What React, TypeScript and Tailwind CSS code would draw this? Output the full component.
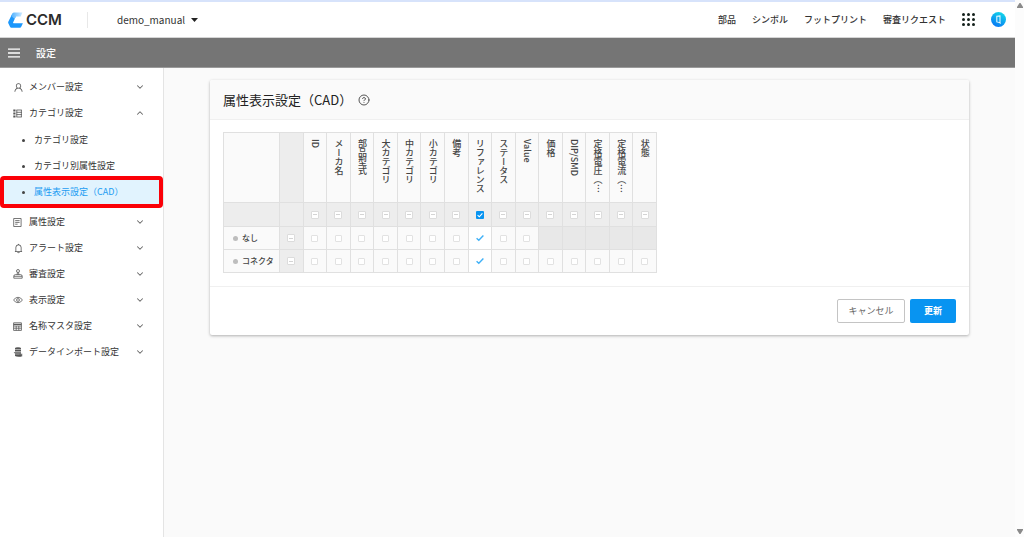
import { useState } from 'react'
import type { ReactNode } from 'react'
import { AiOutlineBell, AiOutlineUser } from 'react-icons/ai'
import { ChevronDown, ChevronUp, CircleQuestionMark } from 'lucide-react'
import clsx from 'clsx'

interface MenuItem {
  label: string
  icon: ReactNode
  children?: string[]
}

const NAV_LINKS = ['部品', 'シンボル', 'フットプリント', '審査リクエスト']

const CURRENT_PAGE = '属性表示設定（CAD）'

const TOP_MENU: MenuItem[] = [
  { label: 'メンバー設定', icon: <AiOutlineUser size={11} /> },
  {
    label: 'カテゴリ設定',
    icon: <CategoryIcon />,
    children: ['カテゴリ設定', 'カテゴリ別属性設定', CURRENT_PAGE],
  },
]

const BOTTOM_MENU: MenuItem[] = [
  { label: '属性設定', icon: <FormIcon /> },
  { label: 'アラート設定', icon: <AiOutlineBell size={11} /> },
  { label: '審査設定', icon: <StampIcon /> },
  { label: '表示設定', icon: <EyeIcon /> },
  { label: '名称マスタ設定', icon: <MasterIcon /> },
  { label: 'データインポート設定', icon: <ImportIcon /> },
]

const COLUMNS = [
  'ID',
  'メーカ名',
  '部品型式',
  '大カテゴリ',
  '中カテゴリ',
  '小カテゴリ',
  '備考',
  'リファレンス',
  'ステータス',
  'Value',
  '価格',
  'DIP/SMD',
  '定格電圧（…',
  '定格電流（…',
  '状態',
]

const FIXED_COLUMN = 'リファレンス'

// number of leading columns that apply to each category
const ROWS = [
  { name: 'なし', available: 10 },
  { name: 'コネクタ', available: 15 },
]

export default function App() {
  return (
    <div className="flex min-h-screen bg-[#fafafa] font-['Noto_Sans_CJK_JP','Noto_Sans',sans-serif] text-[9px] text-[#333]">
      <div className="flex min-w-0 flex-1 flex-col">
        <Header />
        <div className="flex h-[30px] items-center gap-4 border-b border-[#9a9a9a] bg-[#757575] px-2 text-white">
          <button type="button" aria-label="メニュー">
            <svg width="12" height="10" viewBox="0 0 12 10" stroke="currentColor" strokeWidth="1.3">
              <path d="M0 1.2h12M0 5h12M0 8.8h12" />
            </svg>
          </button>
          <h1 className="text-[10px] font-medium">設定</h1>
        </div>
        <div className="flex flex-1">
          <Sidebar />
          <main className="min-w-0 flex-1 px-[46px] pt-3">
            <SettingsCard />
          </main>
        </div>
      </div>
      <div className="flex w-[9px] shrink-0 flex-col items-center justify-between bg-[#fcfcfc] py-[3px]">
        <svg width="6" height="5" viewBox="0 0 6 5" fill="#8a8a8a">
          <path d="M2.5 0h1L6 4v1H0V4z" />
        </svg>
        <svg width="6" height="5" viewBox="0 0 6 5" fill="#8a8a8a">
          <path d="M2.5 5h1L6 1V0H0v1z" />
        </svg>
      </div>
    </div>
  )
}

function Header() {
  return (
    <header className="flex h-[38px] items-center border-t-2 border-b border-t-[#d7e3fb] border-b-[#d5d5d5] bg-white px-2">
      <a href="#" className="flex items-center gap-[3px]">
        <svg width="15" height="16" viewBox="0 0 15 16">
          <defs>
            <linearGradient id="logo-top" x1="0" y1="0" x2="1" y2="0">
              <stop offset="0" stopColor="#4fb1ff" />
              <stop offset="1" stopColor="#cfeaff" />
            </linearGradient>
          </defs>
          <path
            d="M4.4 1.6L0.3 9.8Q0 10.5 0.3 11.2L2 14.8Q2.4 15.7 3.4 15.7H12Q12.8 15.7 13.1 15L14.9 11.2H5.6Q4.8 11.2 5.1 10.4L7.8 4.4z"
            fill="#1c97fb"
          />
          <path d="M6 0.4H14.4L12.7 4.4H7.8L6.6 7L3.2 4L4.4 1.5Q4.9 0.4 6 0.4z" fill="url(#logo-top)" />
        </svg>
        <span className="font-['Inter',sans-serif] text-[15px] leading-4 font-semibold text-[#2b2b2b]">CCM</span>
      </a>
      <div className="ml-[25px] flex h-4 items-center border-l border-[#e8e8e8] pl-[29px]">
        <button type="button" className="flex items-center gap-[6px] text-[10px]">
          demo_manual
          <svg width="7" height="4" viewBox="0 0 7 4" fill="#222">
            <path d="M0 0h7L3.5 4z" />
          </svg>
        </button>
      </div>
      <nav className="ml-auto flex items-center gap-4 font-medium">
        {NAV_LINKS.map((link) => (
          <a key={link} href="#">
            {link}
          </a>
        ))}
        <button type="button" aria-label="アプリ一覧">
          <svg width="13" height="13" viewBox="0 0 13 13" fill="#14211c">
            {[1.5, 6.5, 11.5].map((cy) =>
              [1.5, 6.5, 11.5].map((cx) => <circle key={`${cx}-${cy}`} cx={cx} cy={cy} r="1.5" />),
            )}
          </svg>
        </button>
        <button type="button" aria-label="アカウント" className="mr-px">
          <svg width="15" height="15" viewBox="0 0 16 16">
            <defs>
              <linearGradient id="avatar" x1="0.8" y1="0" x2="0.3" y2="1">
                <stop offset="0" stopColor="#12dbe8" />
                <stop offset="1" stopColor="#0876f5" />
              </linearGradient>
            </defs>
            <circle cx="8" cy="8" r="8" fill="url(#avatar)" />
            <path d="M6.2 4.6L9.6 4.2V11.4L6.2 10.6z" fill="none" stroke="#e9f8ff" strokeWidth="1.1" />
            <path d="M8.6 11.2L10.4 12.2" stroke="#e9f8ff" strokeWidth="1" />
          </svg>
        </button>
      </nav>
    </header>
  )
}

function Sidebar() {
  return (
    <nav className="w-[164px] shrink-0 border-r border-[#e4e4e4] bg-white pt-[6px]">
      <ul>
        {TOP_MENU.map((item) => (
          <MenuRow key={item.label} item={item} />
        ))}
      </ul>
      <ul>
        {BOTTOM_MENU.map((item) => (
          <MenuRow key={item.label} item={item} />
        ))}
      </ul>
    </nav>
  )
}

function MenuRow({ item }: { item: MenuItem }) {
  const Chevron = item.children ? ChevronUp : ChevronDown
  return (
    <li>
      <button type="button" className="flex h-[26px] w-full items-center pr-[18px] pl-[13px] text-left">
        <span className="w-4 text-[#555]">{item.icon}</span>
        <span className="flex-1">{item.label}</span>
        <Chevron size={10} strokeWidth={2.5} className="text-[#666]" />
      </button>
      {item.children ? (
        <ul className="pt-px pb-1">
          {item.children.map((child) => (
            <SubMenuRow key={child} label={child} active={child === CURRENT_PAGE} />
          ))}
        </ul>
      ) : null}
    </li>
  )
}

function SubMenuRow({ label, active }: { label: string; active: boolean }) {
  return (
    <li className="relative">
      <a
        href="#"
        className={clsx('flex h-[26px] items-center gap-[9px] pl-[22px]', active && 'bg-[#e1f3fe] text-[#1c9cf2]')}
      >
        <span className="size-[3px] rounded-full bg-[#444]" />
        {label}
      </a>
      {active ? (
        <span className="pointer-events-none absolute inset-x-0 -inset-y-[3px] rounded-sm border-4 border-[#fb0007]" />
      ) : null}
    </li>
  )
}

function SettingsCard() {
  return (
    <section className="rounded-xs bg-white shadow-[0_1px_3px_rgba(0,0,0,0.3)]">
      <div className="flex h-10 items-center gap-[6px] rounded-t-xs border-b border-[#f0f0f0] bg-[#fafafa] px-[13px]">
        <h2 className="text-[13px] text-[#222]">{CURRENT_PAGE}</h2>
        <button type="button" aria-label="ヘルプ">
          <CircleQuestionMark size={12} strokeWidth={2} className="text-[#555]" />
        </button>
      </div>
      <div className="overflow-x-auto px-[13px] pt-3 pb-[13px]">
        <AttributeTable />
      </div>
      <div className="flex justify-end gap-[5px] border-t border-[#f0f0f0] px-[13px] py-3">
        <button type="button" className="h-6 w-[68px] rounded-xs border border-[#c4c4c4] bg-white text-[#666]">
          キャンセル
        </button>
        <button type="button" className="h-6 w-[46px] rounded-xs bg-[#0894f1] font-bold text-white">
          更新
        </button>
      </div>
    </section>
  )
}

function AttributeTable() {
  return (
    <table className="w-[434px] table-fixed border-collapse bg-[#fafafa] text-[#444] [&_td]:border [&_td]:border-[#e0e0e0] [&_td]:p-0 [&_th]:border [&_th]:border-[#e0e0e0] [&_th]:p-0 [&_th]:font-medium">
      <colgroup>
        <col className="w-14" />
        <col span={16} />
      </colgroup>
      <thead>
        <tr className="h-[70px] align-top">
          <td />
          <td className="bg-[#ededed]" />
          {COLUMNS.map((column) => (
            <th key={column} scope="col">
              <span className="flex justify-center pt-[6px] leading-3">
                <span className="whitespace-nowrap [writing-mode:vertical-rl]">{column}</span>
              </span>
            </th>
          ))}
        </tr>
        <tr className="h-6 bg-[#ededed]">
          <td />
          <td />
          {COLUMNS.map((column) => (
            <td key={column}>
              {column === FIXED_COLUMN ? (
                <HeaderCheck label={`${column} すべて`} />
              ) : (
                <MinusBox label={`${column} すべて`} />
              )}
            </td>
          ))}
        </tr>
      </thead>
      <tbody>
        {ROWS.map((row) => (
          <tr key={row.name} className="h-[23px]">
            <th scope="row" className="text-left text-[8px]">
              <span className="flex items-center gap-1 pl-[9px] whitespace-nowrap">
                <span className="size-[5px] rounded-full bg-[#bdbdbd]" />
                {row.name}
              </span>
            </th>
            <td className="bg-[#ededed]">
              <MinusBox label={`${row.name} すべて`} />
            </td>
            {COLUMNS.map((column, index) => (
              <td
                key={column}
                className={clsx(column === FIXED_COLUMN && 'bg-white', index >= row.available && 'bg-[#e8e8e8]')}
              >
                {index >= row.available ? null : column === FIXED_COLUMN ? (
                  <FixedCheck label={`${row.name} ${column}`} />
                ) : (
                  <EmptyBox label={`${row.name} ${column}`} />
                )}
              </td>
            ))}
          </tr>
        ))}
      </tbody>
    </table>
  )
}

function EmptyBox({ label }: { label: string }) {
  const [checked, setChecked] = useState(false)
  return (
    <input
      type="checkbox"
      aria-label={label}
      checked={checked}
      onChange={(e) => setChecked(e.target.checked)}
      className="mx-auto block size-[7px] appearance-none rounded-[1px] border border-[#e2e2e2] bg-white checked:bg-[#0894f1]"
    />
  )
}

function MinusBox({ label }: { label: string }) {
  return (
    <span className="grid place-items-center">
      <input
        type="checkbox"
        aria-label={label}
        className="col-start-1 row-start-1 size-2 appearance-none rounded-[1px] border border-[#dcdcdc] bg-white"
      />
      <span className="pointer-events-none col-start-1 row-start-1 h-px w-1 bg-[#d4d4d4]" />
    </span>
  )
}

function HeaderCheck({ label }: { label: string }) {
  return (
    <span className="grid place-items-center">
      <input
        type="checkbox"
        aria-label={label}
        defaultChecked
        className="col-start-1 row-start-1 size-2 appearance-none rounded-[1px] bg-[#0894f1]"
      />
      <svg className="pointer-events-none col-start-1 row-start-1" width="8" height="8" viewBox="0 0 8 8" fill="none">
        <path d="M1.6 4.1l1.7 1.7 3.1-3.4" stroke="#fff" strokeWidth="1.1" />
      </svg>
    </span>
  )
}

function FixedCheck({ label }: { label: string }) {
  return (
    <span className="grid place-items-center">
      <input
        type="checkbox"
        aria-label={label}
        checked
        readOnly
        className="col-start-1 row-start-1 size-2 appearance-none"
      />
      <svg className="pointer-events-none col-start-1 row-start-1" width="8" height="8" viewBox="0 0 8 8" fill="none">
        <path d="M0.6 4.2l2.2 2 4.6-4.6" stroke="#3eb0f7" strokeWidth="1.4" />
      </svg>
    </span>
  )
}

function CategoryIcon() {
  return (
    <svg width="9" height="9" viewBox="0 0 9 9" fill="none" stroke="currentColor">
      <path d="M0.3 1.5h2.2M0.3 4.5h2.2M0.3 7.5h2.2" strokeWidth="2" />
      <path d="M3.4 1h5.4M3.4 3.3h5.4M3.4 5.6h5.4M3.4 8h5.4M3.8 1v7M8.4 1v7" strokeWidth="0.8" />
    </svg>
  )
}

function FormIcon() {
  return (
    <svg width="9" height="9" viewBox="0 0 9 9" fill="none" stroke="currentColor" strokeWidth="0.8">
      <path d="M0.7 0.5h7.4v8H0.7zM2.2 2.6h4.4M2.2 4.4h4.4M2.2 6.2h2.4" />
    </svg>
  )
}

function StampIcon() {
  return (
    <svg width="10" height="10" viewBox="0 0 10 10" fill="none" stroke="currentColor" strokeWidth="0.8">
      <circle cx="5" cy="2" r="1.5" />
      <path d="M4.3 3.4v2.2M5.7 3.4v2.2M2.4 5.6h5.2q1.6 0 1.6 1.7H0.8q0-1.7 1.6-1.7zM0.8 7.3v1.9h8.4V7.3" />
    </svg>
  )
}

function EyeIcon() {
  return (
    <svg width="10" height="8" viewBox="0 0 10 8" fill="none" stroke="currentColor" strokeWidth="0.8">
      <path d="M0.6 4Q2.2 1.3 5 1.3T9.4 4Q7.8 6.7 5 6.7T0.6 4z" />
      <circle cx="5" cy="4" r="1.4" />
    </svg>
  )
}

function MasterIcon() {
  return (
    <svg width="9" height="9" viewBox="0 0 9 9" fill="none" stroke="currentColor" strokeWidth="0.8">
      <path d="M0.6 0.8h7.8v7.6H0.6zM0.6 4h7.8M0.6 6.2h7.8M3.2 4v4.4M5.8 4v4.4" />
      <path d="M0.6 2.4h7.8" strokeWidth="1.1" />
    </svg>
  )
}

function ImportIcon() {
  return (
    <svg width="10" height="10" viewBox="0 0 10 10" fill="currentColor">
      <path d="M2 1.3Q2 0.3 5 0.3T8 1.3V2.4H2zM2 3h6v1.6H2zM0.6 5.2H8v1.5H2.2zM2 7.3h6.8v1.9Q7.5 9.8 5.4 9.8T2 9z" />
      <path d="M6.4 6.6h3v2.8h-3z" fillOpacity="0.5" />
    </svg>
  )
}
